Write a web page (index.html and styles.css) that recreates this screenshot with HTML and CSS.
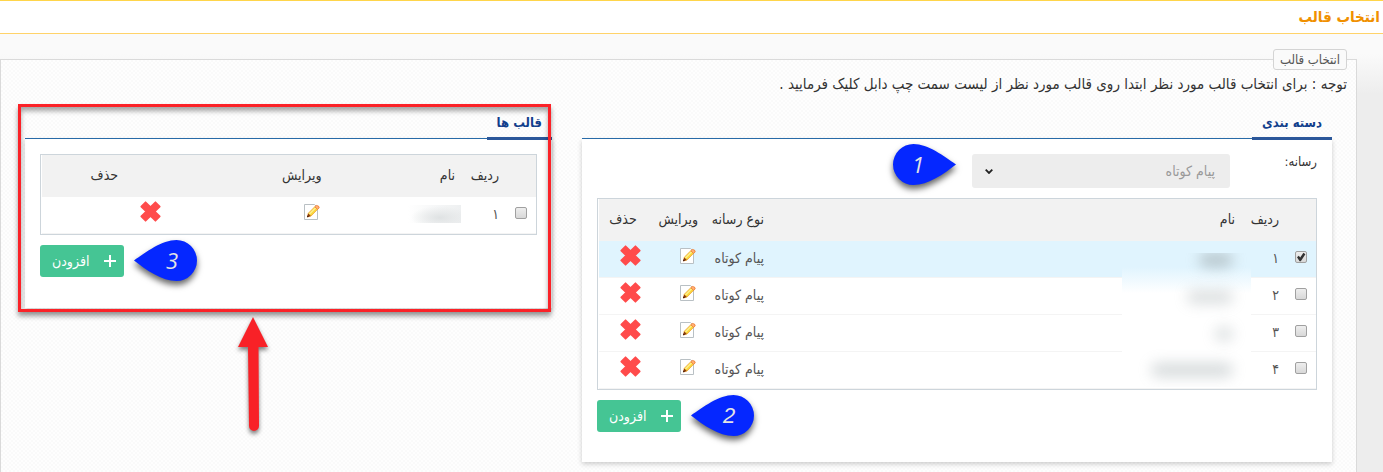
FILE: index.html
```html
<!DOCTYPE html>
<html lang="fa" dir="rtl">
<head>
<meta charset="utf-8">
<title>انتخاب قالب</title>
<meta name="viewport" content="width=device-width, initial-scale=1">
<link rel="stylesheet" href="styles.css">
</head>
<body>
<svg class="defs" aria-hidden="true">
  <defs>
    <linearGradient id="pencil" x1="0" y1="0" x2="1" y2="1">
      <stop offset="0" stop-color="#fff36a"/><stop offset="1" stop-color="#f7c21c"/>
    </linearGradient>
    <symbol id="edit" viewBox="0 0 16 16">
      <path d="M.5.500h10l3 3v12H.5z" fill="#fff" stroke="#b9c0c4"/>
      <path d="M4.300 9.200 10.800 2.700 13.600 5.300 7.100 12 3.500 13z" fill="url(#pencil)" stroke="#eb9c2c" stroke-width=".7"/>
      <path d="M5.500 10 11.600 3.900" stroke="#fffcc0" stroke-width="1"/>
      <path d="M10.800 2.700 12.200 1.500Q15.300 1.300 15.200 4L13.600 5.300z" fill="#ffb27a" stroke="#f07a2c" stroke-width=".8"/>
      <path d="M4.300 9.400 6.800 12 3 13.300z" fill="#8a3a10"/>
      <path d="M3.600 11.500 4.900 12.800 3 13.300z" fill="#311"/>
    </symbol>
    <symbol id="cross" viewBox="0 0 20 20">
      <path d="M5.300 1.200 10 5.900 14.700 1.200 18.800 5.300 14.100 10 18.800 14.700 14.700 18.800 10 14.100 5.300 18.800 1.200 14.700 5.900 10 1.200 5.300z" fill="#ff4b4b" stroke="#ff4b4b" stroke-width="1.600" stroke-linejoin="round"/>
    </symbol>
    <symbol id="plus" viewBox="0 0 12 12">
      <path d="M6 0v12M0 6h12" stroke="#fff" stroke-width="2"/>
    </symbol>
    <symbol id="drop" viewBox="0 0 63 41">
      <path d="M0 20.500C12 12 28 0 42.500 0a20.500 20.500 0 0 1 0 41C28 41 12 30 0 20.500z" fill="#0527ff"/>
    </symbol>
  </defs>
</svg>

<header class="page-head"><h1>انتخاب قالب</h1></header>

<main>
  <fieldset class="picker">
    <legend>انتخاب قالب</legend>
    <p class="note">توجه : برای انتخاب قالب مورد نظر ابتدا روی قالب مورد نظر از لیست سمت چپ دابل کلیک فرمایید .</p>

    <div class="columns">
      <section class="panel">
        <div class="panel-head"><h2>دسته بندی</h2></div>
        <div class="panel-body panel-body-tall">
          <div class="field">
            <label for="media">رسانه:</label>
            <div class="select-wrap">
              <select id="media" disabled><option>پیام کوتاه</option></select>
              <svg class="chevron" viewBox="0 0 8 5"><path d="M.7.700 4 4 7.300.700" fill="none" stroke="#222" stroke-width="1.800"/></svg>
              <div class="callout callout-right"><svg><use href="#drop"/></svg><b>1</b></div>
            </div>
          </div>
          <div class="table-wrap">
            <table>
              <colgroup><col class="c-check"><col class="c-row"><col><col class="c-type"><col class="c-edit"><col class="c-del"></colgroup>
              <thead><tr><th></th><th>ردیف</th><th>نام</th><th>نوع رسانه</th><th>ویرایش</th><th class="del">حذف</th></tr></thead>
              <tbody>
                <tr class="selected"><td class="check"><input type="checkbox" aria-label="ردیف ۱" checked></td><td>۱</td><td></td><td>پیام کوتاه</td><td class="edit"><button class="icon" aria-label="ویرایش"><svg class="i-edit"><use href="#edit"/></svg></button></td><td class="x"><button class="icon" aria-label="حذف"><svg class="i-cross"><use href="#cross"/></svg></button></td></tr>
                <tr><td class="check"><input type="checkbox" aria-label="ردیف ۲"></td><td>۲</td><td></td><td>پیام کوتاه</td><td class="edit"><button class="icon" aria-label="ویرایش"><svg class="i-edit"><use href="#edit"/></svg></button></td><td class="x"><button class="icon" aria-label="حذف"><svg class="i-cross"><use href="#cross"/></svg></button></td></tr>
                <tr><td class="check"><input type="checkbox" aria-label="ردیف ۳"></td><td>۳</td><td></td><td>پیام کوتاه</td><td class="edit"><button class="icon" aria-label="ویرایش"><svg class="i-edit"><use href="#edit"/></svg></button></td><td class="x"><button class="icon" aria-label="حذف"><svg class="i-cross"><use href="#cross"/></svg></button></td></tr>
                <tr><td class="check"><input type="checkbox" aria-label="ردیف ۴"></td><td>۴</td><td></td><td>پیام کوتاه</td><td class="edit"><button class="icon" aria-label="ویرایش"><svg class="i-edit"><use href="#edit"/></svg></button></td><td class="x"><button class="icon" aria-label="حذف"><svg class="i-cross"><use href="#cross"/></svg></button></td></tr>
              </tbody>
            </table>
            <div class="veil"><i class="smudge s1"></i><i class="smudge s2"></i><i class="smudge s3"></i><i class="smudge s4"></i></div>
          </div>
          <div class="actions">
            <button class="add"><svg><use href="#plus"/></svg>افزودن</button>
            <div class="callout callout-left"><svg><use href="#drop"/></svg><b class="plain">2</b></div>
          </div>
        </div>
      </section>

      <section class="panel">
        <div class="panel-head"><h2>قالب ها</h2></div>
        <div class="panel-body">
          <div class="table-wrap">
            <table>
              <colgroup><col class="c-check"><col class="c-row"><col class="c-name"><col class="c-edit-wide"><col></colgroup>
              <thead><tr><th></th><th>ردیف</th><th>نام</th><th>ویرایش</th><th class="del">حذف</th></tr></thead>
              <tbody>
                <tr><td class="check"><input type="checkbox" aria-label="ردیف ۱"></td><td>۱</td><td class="masked"><i class="mask"></i></td><td class="edit"><button class="icon" aria-label="ویرایش"><svg class="i-edit"><use href="#edit"/></svg></button></td><td class="x"><button class="icon" aria-label="حذف"><svg class="i-cross"><use href="#cross"/></svg></button></td></tr>
              </tbody>
            </table>
          </div>
          <div class="actions">
            <button class="add"><svg><use href="#plus"/></svg>افزودن</button>
            <div class="callout callout-left"><svg><use href="#drop"/></svg><b>3</b></div>
          </div>
        </div>
        <div class="frame"></div>
        <svg class="arrow" viewBox="0 0 30 115"><path d="M15 0 30 30H20.500L21 109a5 5 0 0 1-10 0L10 30H0z" fill="#f82127"/></svg>
      </section>
    </div>
  </fieldset>
</main>
</body>
</html>
```
FILE: styles.css
```css
* { box-sizing: border-box; }

body {
  margin: 0;
  font-family: "DejaVu Sans Condensed", "DejaVu Sans", sans-serif;
  font-size: 14px;
  line-height: 20px;
  color: #333;
  background: #ededed;
}

.defs { position: absolute; width: 0; height: 0; }

.page-head {
  height: 34px;
  padding: 0 3px;
  background: #fff;
  border-top: 1px solid #ffd54a;
  border-bottom: 1px solid #ffd36a;
}

h1 {
  margin: 0;
  font-size: 15px;
  line-height: 32px;
  color: #f09000;
}

main {
  padding-top: 15px;
  padding-right: 26px;
  background: linear-gradient(#fafafa 20px, #ededed 60px);
}

.picker {
  min-width: 0;
  margin: 0;
  padding: 0 24px 10px;
  border: 1px solid #dadada;
  border-bottom: 0;
  background: repeating-conic-gradient(#fafafa 0 25%, #fefefe 0 50%) 0 0 / 4px 4px;
}

legend {
  margin-right: -15px;
  padding: 0 6px;
  font-size: 13px;
  line-height: 19px;
  color: #555;
  background: #fafafa;
  border: 1px solid #d4d4d4;
  border-radius: 3px;
}

.note {
  margin: 4px -15px 0;
  font-size: 15px;
}

.columns {
  display: grid;
  grid-template-columns: 750fr 527fr;
  gap: 30px;
  align-items: start;
  margin-top: 13px;
}

.panel { position: relative; min-width: 0; }

.panel-head {
  display: flex;
  height: 32px;
  border-bottom: 1px solid #2a6fae;
}

h2 {
  height: 33px;
  margin: 0;
  padding: 0 10px;
  font-size: 13px;
  line-height: 32px;
  color: #123f8c;
  border-bottom: 3px solid #2b579a;
}

.panel-body {
  min-height: 169px;
  padding: 15px;
  background: #fff;
  box-shadow: 0 2px 5px rgba(0, 0, 0, .2);
}

.panel-body-tall { min-height: 323px; }

.field {
  display: flex;
  align-items: flex-start;
  margin-bottom: 10px;
}

.field label { width: 87px; font-size: 13px; line-height: 16px; }

.select-wrap { position: relative; width: 258px; }

select {
  display: block;
  width: 100%;
  height: 34px;
  padding: 0 15px;
  font: inherit;
  color: #999;
  opacity: 1;
  appearance: none;
  background: #ededed;
  border: 0;
  border-radius: 3px;
}

.chevron {
  position: absolute;
  left: 13px;
  top: 15px;
  width: 8px;
  height: 5px;
}

.table-wrap {
  position: relative;
  padding-left: 1px;
  border: 1px solid #cdd5db;
}

table {
  width: 100%;
  table-layout: fixed;
  border-collapse: separate;
  border-spacing: 0;
}

.c-check { width: 29px; }
.c-row { width: 44px; }
.c-type { width: 66px; }
.c-edit { width: 59px; }
.c-del { width: 48px; }
.c-name { width: 27%; }
.c-edit-wide { width: 33%; }

th, td {
  padding: 0 8px;
  text-align: right;
  white-space: nowrap;
}

th {
  height: 42px;
  padding-bottom: 2px;
  font-weight: normal;
  background: #f2f2f2;
}

th.del { padding: 0 0 2px; text-align: center; }

td {
  height: 37px;
  padding-bottom: 3px;
  color: #555;
  border-bottom: 1px solid #f4f4f4;
}

td.check { padding: 0 9px 4px; }
td.edit { padding: 0 10px 6px; }
td.x { padding: 0 6px 7px; }

.selected td { background: #e0f4fe; }

input[type="checkbox"] {
  display: block;
  width: 12px;
  height: 12px;
  margin: 0;
  appearance: none;
  background: linear-gradient(#eee, #d8d8d8);
  border: 1px solid #a0a0a0;
  border-radius: 2px;
}

input:checked::before {
  content: "";
  display: block;
  height: 10px;
  background: #333;
  clip-path: polygon(10% 52%, 28% 38%, 42% 55%, 74% 8%, 94% 22%, 48% 92%, 36% 92%);
}

.icon {
  display: block;
  padding: 0;
  background: none;
  border: 0;
}

.icon svg { display: block; }
.i-edit { width: 16px; height: 16px; }
.i-cross { width: 21px; height: 21px; }

.actions {
  position: relative;
  display: flex;
  justify-content: flex-end;
  margin-top: 10px;
}

.add {
  display: flex;
  align-items: center;
  justify-content: space-between;
  width: 84px;
  height: 32px;
  padding: 0 8px 0 12px;
  font: inherit;
  color: #fff;
  background: #45c594;
  border: 0;
  border-radius: 3px;
}

.add svg { width: 12px; height: 12px; }

.callout {
  position: absolute;
  width: 63px;
  height: 41px;
}

.callout svg {
  display: block;
  width: 63px;
  height: 41px;
  filter: drop-shadow(0 4px 3px rgba(0, 0, 0, .6));
}

.callout b {
  position: absolute;
  inset: 0 12px 0 0;
  padding-left: 25px;
  font: italic 22px/41px "Open Sans", sans-serif;
  text-align: center;
  color: #e4e4e4;
}

.callout b.plain { font-family: "Liberation Sans", sans-serif; }

.callout-left { left: 94px; top: -5px; }
.callout-right { left: -79px; top: -10px; }
.callout-right svg { transform: scaleX(-1); }
.callout-right b { inset: 0 25px 0 0; padding-left: 12px; }

.veil {
  position: absolute;
  right: 65px;
  top: 54px;
  width: 129px;
  height: 134px;
  overflow: hidden;
  background: linear-gradient(#e0f4fe 14px, #fff 40px);
}

.smudge {
  position: absolute;
  height: 14px;
  border-radius: 7px;
  background: #9aa5a8;
  opacity: .35;
  filter: blur(7px);
}

.s1 { right: 18px; top: 0; width: 34px; opacity: .6; }
.s2 { right: 18px; top: 37px; width: 46px; }
.s3 { right: 18px; top: 74px; width: 18px; }
.s4 { right: 18px; top: 110px; width: 82px; opacity: .4; }

.masked { padding-right: 2px; }

.mask {
  display: block;
  width: 53px;
  height: 18px;
  background: radial-gradient(ellipse at 60% 70%, #dfe2e3, transparent 65%), linear-gradient(to left, #eef0f1, #fff);
}

.frame {
  position: absolute;
  inset: -3px 1px -4px -7px;
  border: 3px solid #fb2228;
  box-shadow: 0 4px 5px rgba(0, 0, 0, .4), inset 0 4px 5px rgba(0, 0, 0, .35);
  pointer-events: none;
}

.arrow {
  position: absolute;
  left: 213px;
  top: calc(100% + 9px);
  width: 30px;
  height: 115px;
  filter: drop-shadow(0 3px 2px rgba(0, 0, 0, .5));
}
```
